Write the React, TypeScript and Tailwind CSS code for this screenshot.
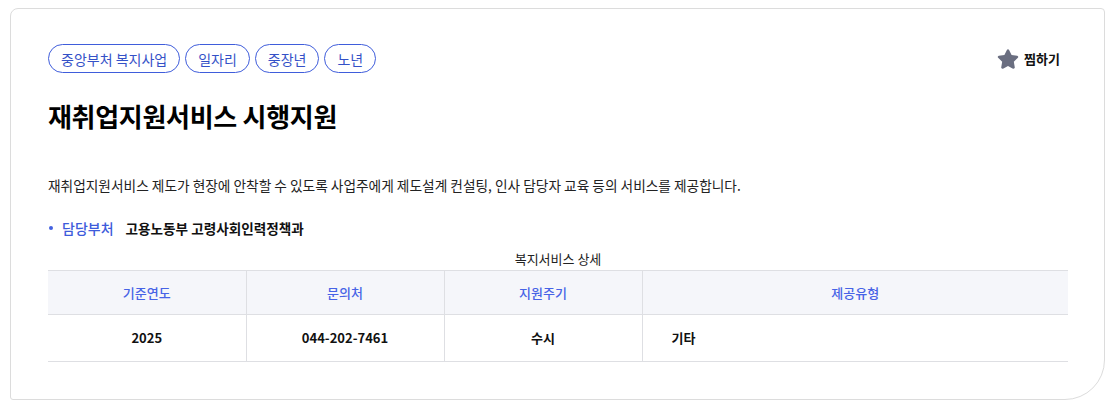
import { FaStar } from 'react-icons/fa'

const tags = ['중앙부처 복지사업', '일자리', '중장년', '노년']

const columns = [
  { label: '기준연도', value: '2025', w: 'w-[198px]', align: 'text-center' },
  { label: '문의처', value: '044-202-7461', w: 'w-[198px]', align: 'text-center' },
  { label: '지원주기', value: '수시', w: 'w-[198px]', align: 'text-center' },
  { label: '제공유형', value: '기타', w: '', align: 'text-left pl-[29px]' },
]

export default function App() {
  return (
    <div
      className="w-[1115px] h-[408px] bg-white pt-[8px] pl-[10px] pr-[10px]"
      style={{ fontFamily: '"Noto Sans CJK KR", "Noto Sans", sans-serif' }}
    >
      <div className="w-[1095px] h-[392px] border border-[#dcdcdc] rounded-tl-[8px] rounded-tr-[4px] rounded-bl-[3px] rounded-br-[40px] px-[37px] pt-[35px]">
        <div className="flex items-center justify-between">
          <div className="flex gap-[5px]">
            {tags.map((t) => (
              <span
                key={t}
                className="h-[29px] px-[12px] flex items-center rounded-full border border-[#3f5ddb] text-[#3451c7] text-[14px] leading-none"
              >
                {t}
              </span>
            ))}
          </div>
          <button type="button" className="flex items-center gap-[5px] mr-[7px] text-[#111] text-[13px] font-bold">
            <FaStar className="w-[22px] h-[22px] text-[#6a6e80]" />
            찜하기
          </button>
        </div>

        <h1 className="mt-[26px] text-[26px] leading-[34px] font-bold text-black tracking-[-0.3px]">
          재취업지원서비스 시행지원
        </h1>

        <p className="mt-[42px] text-[13.7px] leading-[20px] text-[#222]">
          재취업지원서비스 제도가 현장에 안착할 수 있도록 사업주에게 제도설계 컨설팅, 인사 담당자 교육 등의 서비스를 제공합니다.
        </p>

        <div className="mt-[23px] flex items-center text-[14px] leading-[20px]">
          <span className="w-[4px] h-[4px] rounded-full bg-[#4361e0] ml-[1px] mr-[9px]" />
          <span className="text-[#3d5bdb] font-medium">담당부처</span>
          <span className="ml-[12px] text-[13.6px] font-bold text-[#111]">고용노동부 고령사회인력정책과</span>
        </div>

        <table className="mt-[11px] w-[1020px] border-collapse text-[13px]">
          <caption className="text-[13px] leading-[20px] text-[#222] pb-[1px]">복지서비스 상세</caption>
          <thead>
            <tr className="bg-[#f5f6fa] border-t border-b border-[#dedfe3]">
              {columns.map((c, i) => (
                <th
                  key={c.label}
                  className={`${c.w} h-[44px] font-medium text-[#4763e6] text-center ${i > 0 ? 'border-l border-[#dedfe3]' : ''}`}
                >
                  {c.label}
                </th>
              ))}
            </tr>
          </thead>
          <tbody>
            <tr className="border-b border-[#dedfe3]">
              {columns.map((c, i) => (
                <td
                  key={c.label}
                  className={`${c.align} h-[47px] font-bold text-[#111] ${i > 0 ? 'border-l border-[#dedfe3]' : ''}`}
                >
                  {c.value}
                </td>
              ))}
            </tr>
          </tbody>
        </table>
      </div>
    </div>
  )
}
